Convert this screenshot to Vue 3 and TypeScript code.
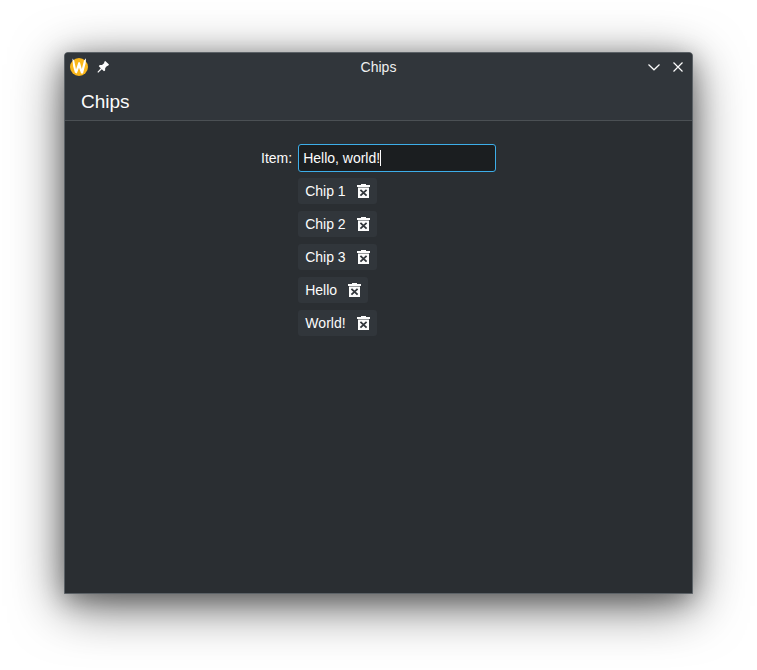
<script setup lang="ts">
import { ref } from 'vue'

const item = ref<string>('Hello, world!')
const chips = ref<string[]>(['Chip 1', 'Chip 2', 'Chip 3', 'Hello', 'World!'])

function addChip(): void {
  const text = item.value.trim()
  if (text) chips.value.push(text)
}

function removeChip(index: number): void {
  chips.value.splice(index, 1)
}
</script>

<template>
  <div class="desktop">
    <main class="window">
      <header class="titlebar">
        <div class="tools">
          <svg class="logo" viewBox="0 0 18 18" width="18" height="18">
            <circle cx="9" cy="9" r="9" fill="#fab71b" />
            <path d="M2.4 .4 4.2 2.6 6 11.4 8.4 4.2 9.9 4.2 11.8 11 14 2.4 16 .3 15.7 5 13 15.6 11.1 15.6 9 9.8 6.8 15.6 4.9 14.6 3.1 8.2Z" fill="#fff" />
          </svg>
          <svg class="pin" viewBox="0 0 12 12" width="12" height="12">
            <path d="M8.3 0 12 3.6 10.9 5 10.2 4.8 8.2 7 8.1 9.5 7 10.2 4.8 8.2 1.2 11.7.4 10.9 3.8 7.2 1.8 5.2 2.7 4 5 4 7.3 2 7.1 1.1Z" fill="#fcfcfc" />
          </svg>
        </div>
        <span class="caption">Chips</span>
        <div class="controls">
          <svg viewBox="0 0 12 12" width="12" height="12"><path d="M.5 3.5 6 8.8 11.5 3.5" /></svg>
          <svg viewBox="0 0 12 12" width="12" height="12"><path d="M1.5 1.5 10.5 10.5M10.5 1.5 1.5 10.5" /></svg>
        </div>
      </header>
      <h1 class="heading">Chips</h1>
      <section class="form">
        <span class="label">Item:</span>
        <div class="fields">
          <div class="input" tabindex="0" @keydown.enter="addChip">{{ item }}<i class="caret"></i></div>
          <div class="chips">
            <div v-for="(chip, index) in chips" :key="index" class="chip">
              <span>{{ chip }}</span>
              <svg viewBox="0 0 13 14" width="13" height="14" @click="removeChip(index)">
                <path class="bin" d="M4 0H9V1H13V3H0V1H4ZM1 3.6H12V14H1Z" />
                <path class="cross" d="M3.4 5.9 9.6 11.7M9.6 5.9 3.4 11.7" />
              </svg>
            </div>
          </div>
        </div>
      </section>
    </main>
  </div>
</template>

<style>
body {
  margin: 0;
  background: #fff;
}
</style>

<style scoped>
.desktop {
  box-sizing: border-box;
  width: 757px;
  height: 670px;
  padding: 52px 64px 76px;
  overflow: hidden;
  font: 14px/16px "Liberation Sans", Arial, sans-serif;
  font-kerning: none;
  color: #fcfcfc;
}
.window {
  box-sizing: border-box;
  width: 629px;
  height: 542px;
  border: 1px solid #5b6166;
  border-radius: 4px 4px 0 0;
  background: #2a2e32;
  box-shadow: 0 12px 52px rgba(0, 0, 0, 0.6), 0 6px 24px rgba(0, 0, 0, 0.3);
}
.titlebar {
  display: grid;
  grid-template-columns: 1fr auto 1fr;
  align-items: center;
  height: 28px;
  padding: 0 8px 1px 5px;
  border-radius: 3px 3px 0 0;
  background: #31363b;
}
.caption {
  padding-left: 3px;
  color: #eff0f1;
}
.tools,
.controls {
  display: flex;
  align-items: center;
}
.tools {
  gap: 9px;
}
.controls {
  gap: 12px;
  justify-content: flex-end;
}
.controls path {
  fill: none;
  stroke: #fcfcfc;
  stroke-width: 1.2;
}
.heading {
  box-sizing: border-box;
  height: 39px;
  margin: 0;
  padding-left: 16px;
  border-bottom: 1px solid #4b5054;
  background: #31363b;
  font-size: 19px;
  font-weight: 400;
  line-height: 39px;
}
.form {
  display: flex;
  gap: 6px;
  padding: 23px 0 0 196px;
}
.label {
  line-height: 28px;
}
.fields {
  display: flex;
  flex-direction: column;
  gap: 6px;
}
.chips {
  display: flex;
  flex-direction: column;
  align-items: flex-start;
  gap: 7px;
}
.input {
  box-sizing: border-box;
  display: flex;
  align-items: center;
  width: 198px;
  height: 28px;
  padding: 0 4px;
  border: 1px solid #3daee9;
  border-radius: 3px;
  outline: none;
  background: #1b1e20;
}
.caret {
  width: 1px;
  height: 16px;
  background: #fcfcfc;
}
.chip {
  box-sizing: border-box;
  display: flex;
  align-items: center;
  gap: 11px;
  height: 26px;
  padding: 0 7px;
  border-radius: 3px;
  background: #31363b;
}
.bin {
  fill: #fcfcfc;
}
.cross {
  fill: none;
  stroke: #31363b;
  stroke-width: 1.8;
}
</style>
